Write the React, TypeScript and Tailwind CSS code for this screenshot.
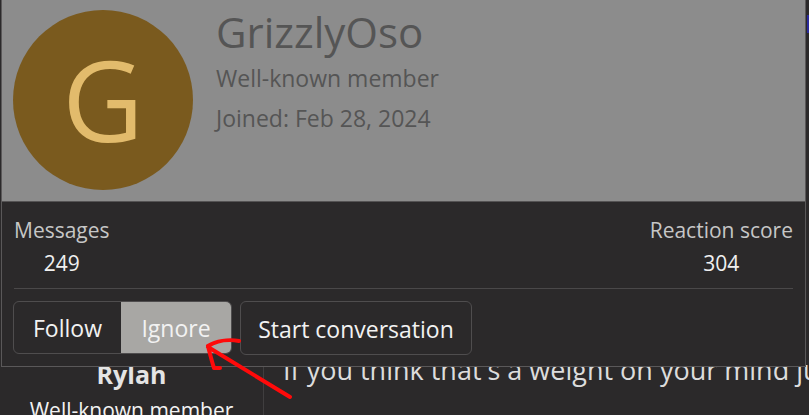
export default function App() {
  return (
    <div className="relative h-[415px] w-[809px] overflow-hidden bg-[#2b292a] font-['Open_Sans',sans-serif]">
      {/* page underneath the tooltip */}
      <div className="flex h-[352px] justify-end">
        <div className="mt-[15px] h-[18px] w-[2px] bg-[#2a2a9a]" />
      </div>
      <div className="flex">
        <div className="flex h-[63px] w-[264px] shrink-0 flex-col items-center border-r border-[#403e3f] pt-[6px]">
          <div className="text-[25px] leading-[32px] font-bold text-[#e4e4e4]">Rylah</div>
          <div className="mt-[7px] text-[21px] leading-[26px] text-[#f2f2f2]">Well-known member</div>
        </div>
        <div className="pl-[19px] pt-[1px] text-[27px] leading-[34px] whitespace-nowrap text-[#dcdcdc]">
          If you think that's a weight on your mind just let it go
        </div>
      </div>

      {/* member tooltip */}
      <div className="absolute top-[-1px] left-[1px] w-[805px] overflow-hidden border border-[#5a5859] bg-[#2b292a]">
        <div className="flex h-[202px] border-b border-[#555354] bg-[#8c8c8c] pt-[10px] pl-[11px]">
          <div className="flex h-[180px] w-[180px] items-center justify-center rounded-full bg-[#7a5a1e] pb-[2px] text-[112px] leading-none text-[#e2bb6c]">
            G
          </div>
          <div className="ml-[23px] flex flex-col text-[#555555]">
            <div className="-mt-[2px] text-[42px] leading-[48px]">GrizzlyOso</div>
            <div className="mt-[7px] text-[23px] leading-[30px]">Well-known member</div>
            <div className="mt-[10px] text-[23px] leading-[30px]">Joined: Feb 28, 2024</div>
          </div>
        </div>
        <div className="px-[11px] pt-[13px] pb-[11px]">
          <div className="flex justify-between px-px">
            <div className="flex flex-col items-center">
              <div className="text-[21px] leading-[30px] text-[#c6c6c6]">Messages</div>
              <div className="mt-[3px] text-[21px] leading-[30px] text-[#f0f0f0]">249</div>
            </div>
            <div className="flex flex-col items-center">
              <div className="text-[21px] leading-[30px] text-[#c6c6c6]">Reaction score</div>
              <div className="mt-[3px] text-[21px] leading-[30px] text-[#f0f0f0]">304</div>
            </div>
          </div>
          <div className="mx-px mt-[10px] h-px bg-[#4a4849]" />
          <div className="mt-[12px] flex gap-[8px] text-[23px] text-[#f2f2f2]">
            <div className="flex h-[53px] overflow-hidden rounded-[6px] border border-[#4f4d4e]">
              <div className="flex w-[107px] items-center justify-center pt-[2px]">Follow</div>
              <div className="flex w-[110px] items-center justify-center bg-[#a8a7a4] pt-[2px]">Ignore</div>
            </div>
            <div className="flex h-[54px] w-[232px] items-center justify-center rounded-[6px] border border-[#4f4d4e] pt-[2px]">
              Start conversation
            </div>
          </div>
        </div>
      </div>

      {/* red annotation arrow */}
      <svg className="absolute top-0 left-0" width="809" height="415" viewBox="0 0 809 415" fill="none">
        <path
          d="M239 341 C228 339 216 341 208 346 M208 346 C210 354 212 362 214 368 L220 368 M208 347 L290 397"
          stroke="#ff0a0a"
          strokeWidth="4"
          strokeLinecap="round"
          strokeLinejoin="round"
        />
      </svg>
    </div>
  );
}
